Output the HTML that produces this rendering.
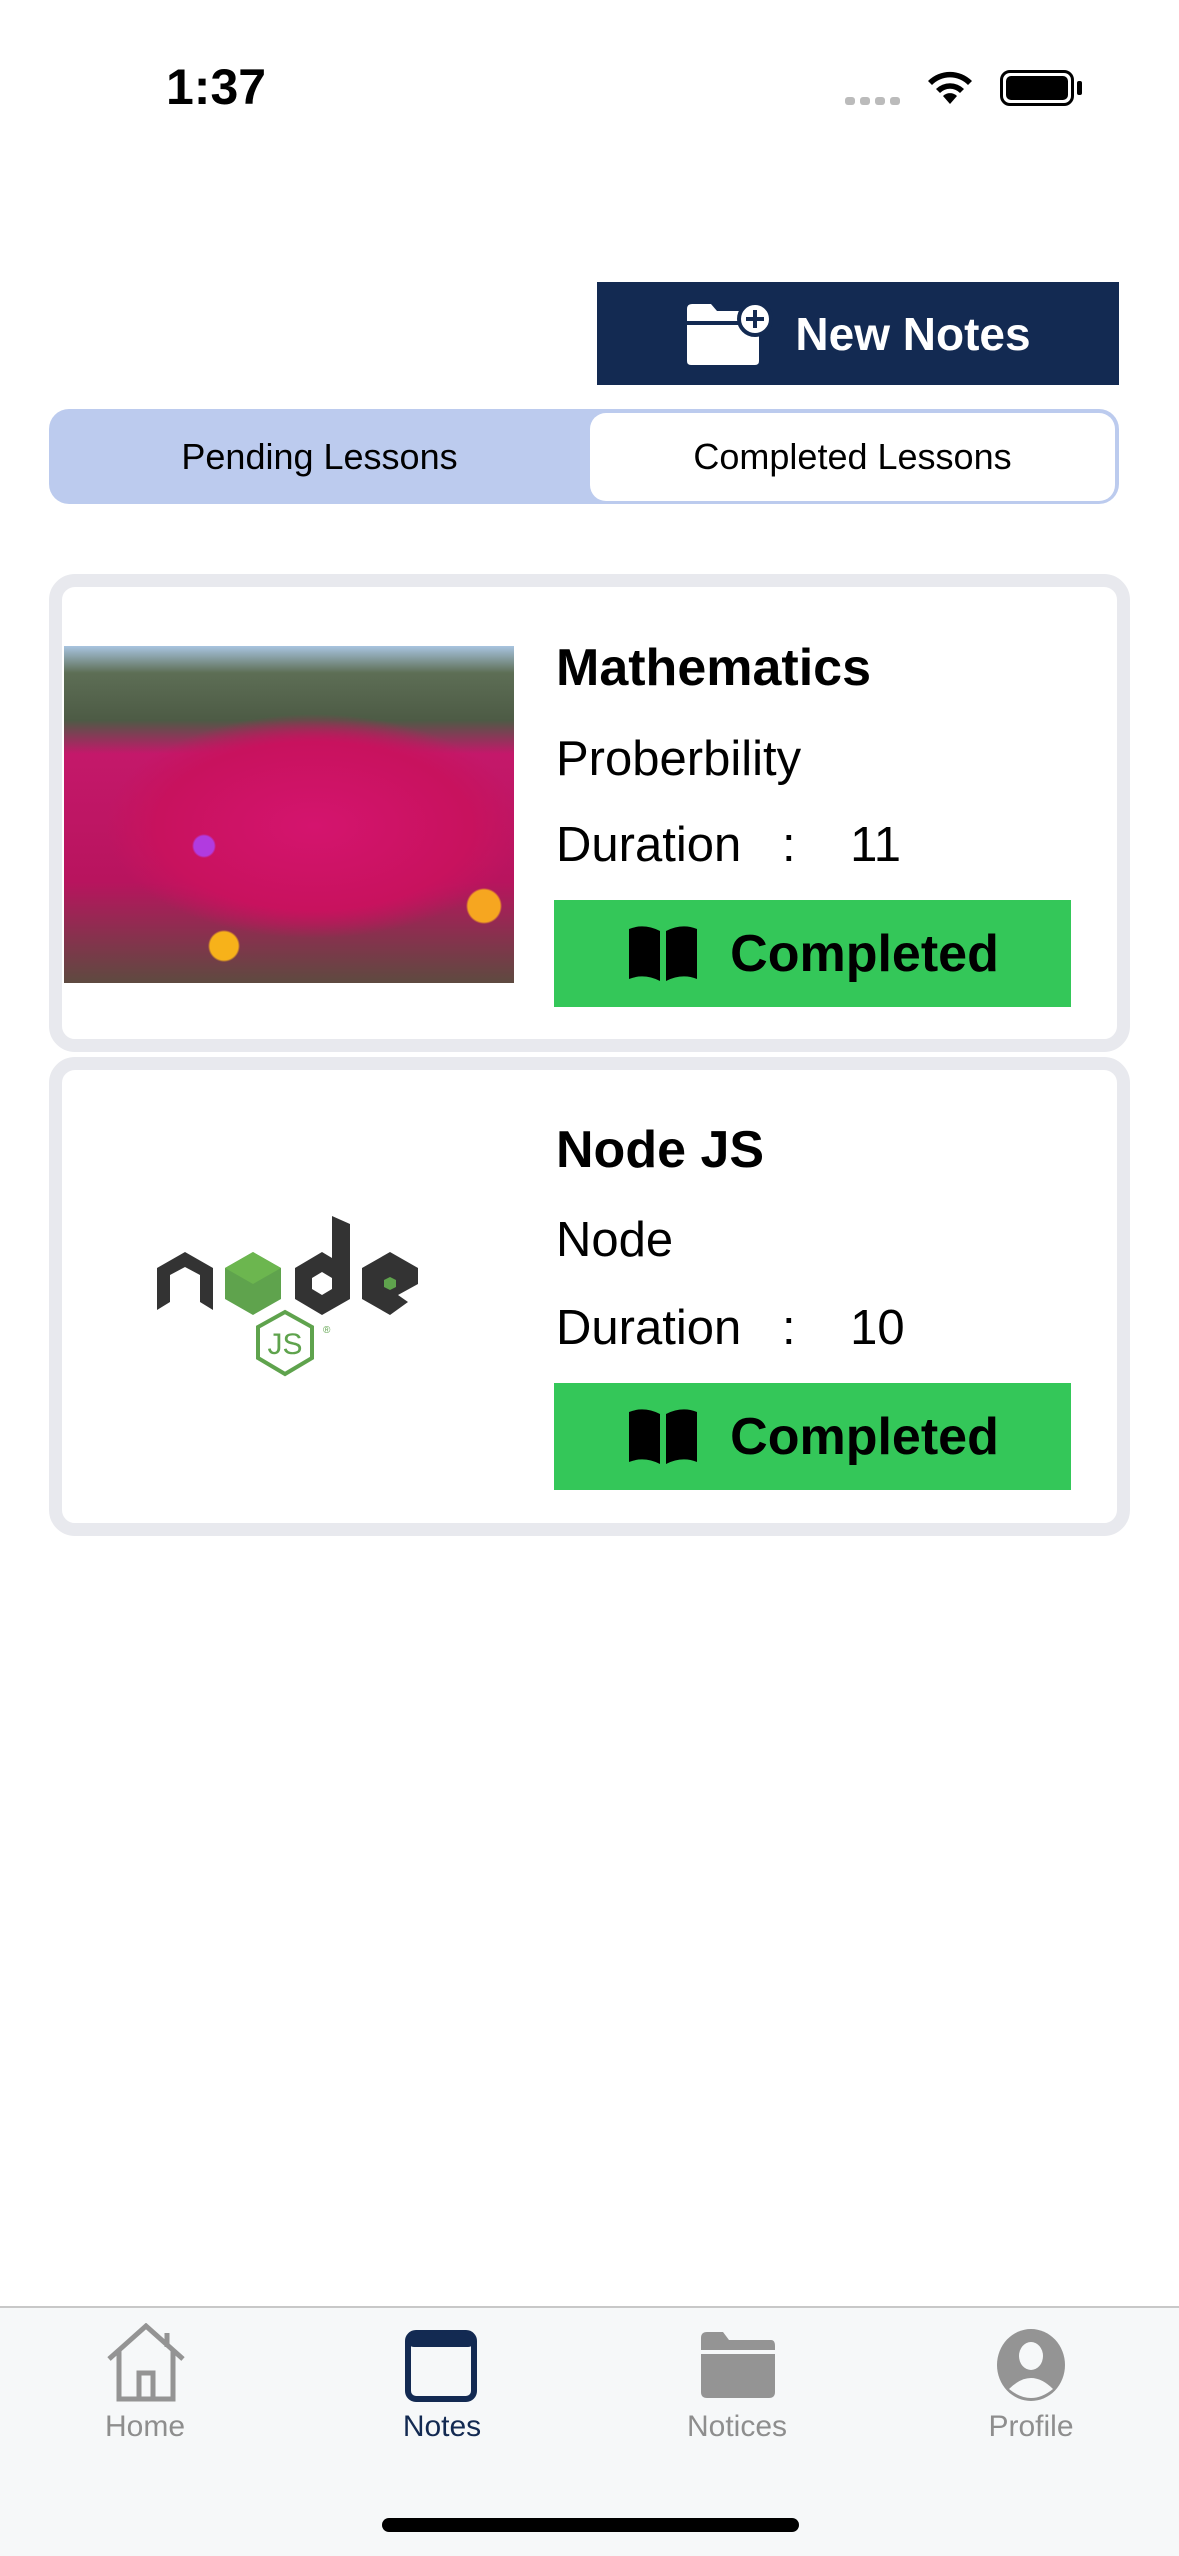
<!DOCTYPE html>
<html><head><meta charset="utf-8"><style>
*{margin:0;padding:0;box-sizing:border-box}
body{width:1179px;height:2556px;background:#fff;position:relative;overflow:hidden;font-family:"Liberation Sans",sans-serif;color:#000}
.abs{position:absolute}
.card{position:absolute;left:49px;width:1081px;border:13px solid #e8e9ee;border-radius:26px;background:#fff}
.t{position:absolute;left:556px;white-space:nowrap}
.title{font-size:52px;font-weight:bold}
.sub{font-size:49px}
.btn{position:absolute;left:554px;width:517px;height:107px;background:#34c759;display:flex;align-items:center;justify-content:center;font-size:52px;font-weight:bold;gap:30px}
.tab{position:absolute;top:2410px;width:200px;text-align:center;font-size:30px;color:#8e8e8e}
</style></head><body>
<div class="abs" style="left:166px;top:58px;font-size:50px;font-weight:bold">1:37</div>
<div class="abs" style="left:845px;top:97px;width:60px;height:8px;display:flex;gap:5px"><i style="width:10px;height:8px;background:#bbb;border-radius:3px"></i><i style="width:10px;height:8px;background:#bbb;border-radius:3px"></i><i style="width:10px;height:8px;background:#bbb;border-radius:3px"></i><i style="width:10px;height:8px;background:#bbb;border-radius:3px"></i></div>
<svg class="abs" style="left:925px;top:66px" width="50" height="40" viewBox="0 0 50 40"><path d="M25 38 L18 30 A10 10 0 0 1 32 30 Z" fill="#000"/><path d="M11 23 A20 20 0 0 1 39 23 L35 27 A14 14 0 0 0 15 27Z" fill="#000"/><path d="M3 15 A31 31 0 0 1 47 15 L43 19 A25 25 0 0 0 7 19Z" fill="#000"/></svg>
<div class="abs" style="left:1000px;top:70px;width:74px;height:36px;border:3px solid #000;border-radius:10px;padding:3px"><div style="width:100%;height:100%;background:#000;border-radius:5px"></div></div>
<div class="abs" style="left:1077px;top:81px;width:5px;height:14px;background:#000;border-radius:2px"></div>

<div class="abs" style="left:597px;top:282px;width:522px;height:103px;background:#132a52;display:flex;align-items:center;justify-content:center;gap:22px;color:#fff;font-size:46px;font-weight:bold">
<svg width="88" height="66" viewBox="0 0 88 66"><path d="M2 8 Q2 3 7 3 H26 L32 10 H56 V20 H2Z M2 24 H74 V60 Q74 64 70 64 H6 Q2 64 2 60Z" fill="#fff"/><circle cx="70" cy="18" r="16" fill="#fff" stroke="#132a52" stroke-width="4"/><path d="M70 9 V27 M61 18 H79" stroke="#132a52" stroke-width="4"/></svg>
<span>New Notes</span></div>

<div class="abs" style="left:49px;top:409px;width:1070px;height:95px;background:#bccbee;border-radius:20px"></div>
<div class="abs" style="left:590px;top:413px;width:525px;height:88px;background:#fff;border-radius:16px"></div>
<div class="abs" style="left:49px;top:436px;width:541px;text-align:center;font-size:36px">Pending Lessons</div>
<div class="abs" style="left:590px;top:436px;width:525px;text-align:center;font-size:36px">Completed Lessons</div>

<div class="card" style="top:574px;height:478px"></div>
<div class="abs" style="left:64px;top:646px;width:450px;height:337px;background:
radial-gradient(circle at 160px 300px,#f7b21a 0 14px,transparent 16px),
radial-gradient(circle at 420px 260px,#f6a620 0 16px,transparent 18px),
radial-gradient(circle at 140px 200px,#b13be0 0 10px,transparent 12px),
radial-gradient(ellipse 260px 140px at 250px 180px,#d4146e 0,#c8125e 60%,transparent 80%),
linear-gradient(180deg,#a8c4e0 0,#5d6e55 8%,#4d5b45 22%,#c4186a 32%,#b8145e 70%,#5e4a40 100%)"></div>
<div class="t title" style="top:638px">Mathematics</div>
<div class="t sub" style="top:731px">Proberbility</div>
<div class="t sub" style="top:817px">Duration&nbsp;&nbsp;&nbsp;:&nbsp;&nbsp;&nbsp;&nbsp;11</div>
<div class="btn" style="top:900px"><svg width="74" height="58" viewBox="0 0 74 58"><path d="M3 4 Q18 -2 34 6 V56 Q18 48 3 54Z M71 4 Q56 -2 40 6 V56 Q56 48 71 54Z" fill="#000"/></svg><span>Completed</span></div>

<div class="card" style="top:1057px;height:479px"></div>
<svg class="abs" style="left:140px;top:1200px" width="300" height="190" viewBox="0 0 300 190">
<polygon points="17,68 45,52 73,68 73,110 60,102 60,75 45,67 30,75 30,102 17,110" fill="#333"/>
<polygon points="113,52 141,68 141,99 113,115 85,99 85,68" fill="#5fa34d"/>
<polygon points="113,52 141,68 113,84 85,68" fill="#6cb64f"/>
<polygon points="192,16 210,24 210,99 182,115 155,99 155,68 182,52 192,58" fill="#333"/>
<polygon points="182,72 192,78 192,89 182,95 172,89 172,78" fill="#fff"/>
<polygon points="250,52 278,68 278,84 258,95 268,102 250,115 222,99 222,68" fill="#333"/>
<polygon points="250,77 256,80 256,87 250,90 244,87 244,80" fill="#5fa34d"/>
<polygon points="145,112 172,127 172,158 145,174 118,158 118,127" fill="none" stroke="#5fa34d" stroke-width="4"/>
<text x="145" y="154" font-size="30" fill="#5fa34d" text-anchor="middle" font-family="Liberation Sans">JS</text>
<text x="183" y="133" font-size="10" fill="#5fa34d" font-family="Liberation Sans">®</text>
</svg>
<div class="t title" style="top:1120px">Node JS</div>
<div class="t sub" style="top:1212px">Node</div>
<div class="t sub" style="top:1300px">Duration&nbsp;&nbsp;&nbsp;:&nbsp;&nbsp;&nbsp;&nbsp;10</div>
<div class="btn" style="top:1383px"><svg width="74" height="58" viewBox="0 0 74 58"><path d="M3 4 Q18 -2 34 6 V56 Q18 48 3 54Z M71 4 Q56 -2 40 6 V56 Q56 48 71 54Z" fill="#000"/></svg><span>Completed</span></div>

<div class="abs" style="left:0;top:2306px;width:1179px;height:250px;background:#f6f8f9;border-top:2px solid #c8c8c8"></div>
<svg class="abs" style="left:105px;top:2323px" width="82" height="82" viewBox="0 0 82 82"><path d="M4 36 L41 3 L78 36 M14 28 V76 H68 V28 M34 76 V50 H48 V76 M62 10 V24" fill="none" stroke="#949494" stroke-width="5"/></svg>
<svg class="abs" style="left:405px;top:2330px" width="72" height="72" viewBox="0 0 72 72"><rect x="3" y="3" width="66" height="66" rx="8" fill="none" stroke="#132a52" stroke-width="6"/><rect x="3" y="3" width="66" height="14" rx="6" fill="#132a52"/></svg>
<svg class="abs" style="left:697px;top:2330px" width="80" height="70" viewBox="0 0 80 70"><path d="M4 8 Q4 2 10 2 H26 L32 10 H74 Q78 10 78 16 V20 H4Z M4 24 H78 V62 Q78 68 72 68 H10 Q4 68 4 62Z" fill="#949494"/></svg>
<svg class="abs" style="left:995px;top:2327px" width="72" height="76" viewBox="0 0 72 76"><ellipse cx="36" cy="38" rx="34" ry="36" fill="#949494"/><ellipse cx="36" cy="29" rx="12" ry="14" fill="#f6f8f9"/><path d="M14 62 Q36 40 58 62 Q36 80 14 62Z" fill="#f6f8f9"/></svg>
<div class="tab" style="left:45px">Home</div>
<div class="tab" style="left:342px;color:#132a52">Notes</div>
<div class="tab" style="left:637px">Notices</div>
<div class="tab" style="left:931px">Profile</div>
<div class="abs" style="left:382px;top:2518px;width:417px;height:14px;background:#000;border-radius:7px"></div>
</body></html>
